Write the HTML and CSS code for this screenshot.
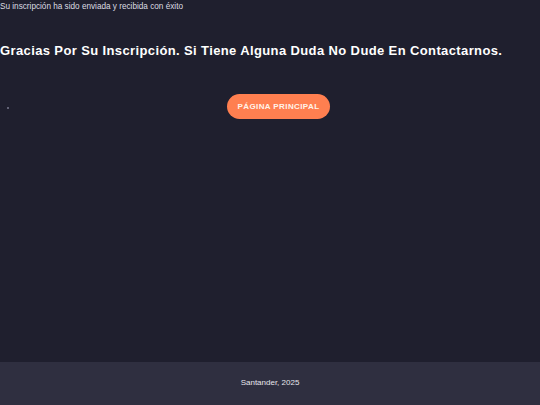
FILE: index.html
```html
<!DOCTYPE html>
<html lang="es">
<head>
<meta charset="utf-8">
<title>Inscripción</title>
<link rel="stylesheet" href="styles.css">
</head>
<body>
<div class="page">
  <main class="content">
    <p class="notice">Su inscripción ha sido enviada y recibida con éxito</p>
    <h1 class="title">Gracias Por Su Inscripción. Si Tiene Alguna Duda No Dude En Contactarnos.</h1>
    <ul class="links">
      <li class="link-item"><a class="btn" href="#">PÁGINA PRINCIPAL</a></li>
    </ul>
  </main>
  <footer class="footer">Santander, 2025</footer>
</div>
</body>
</html>
```

FILE: styles.css
```css
html, body {
  margin: 0;
  padding: 0;
  height: 100%;
}
body {
  background: #1f1f2e;
  font-family: "Liberation Sans", Arial, sans-serif;
  color: #ffffff;
}
.page {
  min-height: 100%;
  display: flex;
  flex-direction: column;
}
.content {
  flex: 1;
}
.notice {
  margin: 0;
  padding-top: 2px;
  font-size: 8.2px;
  line-height: 10px;
  color: #dcdce2;
}
.title {
  margin: 30px 0 0 0;
  font-family: "Liberation Sans", Arial, sans-serif;
  font-size: 13px;
  line-height: 18px;
  font-weight: 700;
  letter-spacing: 0.38px;
  color: #ffffff;
}
.links {
  margin: 34px 0 0 0;
  padding-left: 17px;
  list-style: disc;
}
.link-item {
  text-align: center;
  font-size: 6px;
}
.link-item::marker {
  color: #7a7a8e;
  font-size: 6px;
}
.btn {
  display: inline-block;
  background: #ff7f50;
  color: #fff3ea;
  text-decoration: none;
  font-size: 8px;
  font-weight: bold;
  letter-spacing: 0.4px;
  line-height: 25px;
  height: 25px;
  padding: 0 11px;
  border-radius: 13px;
}
.footer {
  height: 41px;
  padding-bottom: 2px;
  background: #2f2f40;
  color: #e6e6ec;
  font-size: 8px;
  display: flex;
  align-items: center;
  justify-content: center;
}
```
